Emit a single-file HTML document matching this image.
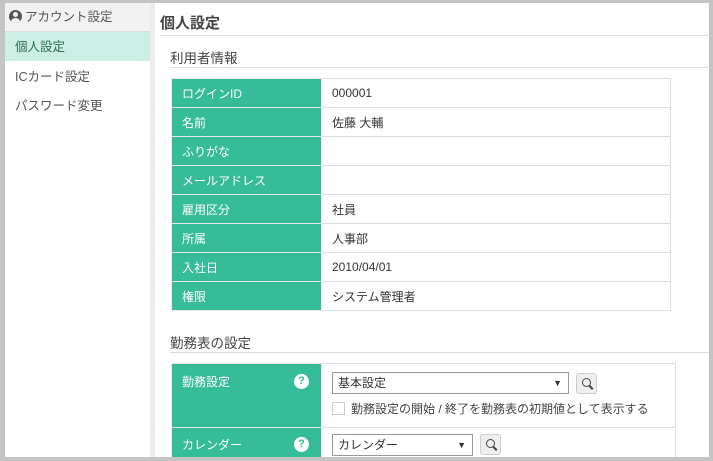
<!DOCTYPE html>
<html><head><meta charset="utf-8"><style>
*{box-sizing:border-box;margin:0;padding:0}
body{width:713px;height:461px;overflow:hidden;background:#c4c4c4;font-family:"Liberation Sans","Noto Sans CJK JP",sans-serif;font-size:12px;color:#333;position:relative}
.side{position:absolute;left:5px;top:3px;width:145px;height:454px;background:#fff}
.sh{height:29px;background:#f2f2f2;border-bottom:1px solid #ddd;line-height:29px;padding-left:4px;color:#555;font-size:12.5px}
.sh .ic{display:inline-block;width:13px;height:13px;border-radius:50%;background:#555;vertical-align:-2px;margin-right:3px;position:relative;overflow:hidden}
.sh .ic:before{content:"";position:absolute;left:4px;top:2px;width:5px;height:5px;border-radius:50%;background:#f2f2f2}
.sh .ic:after{content:"";position:absolute;left:2px;top:8px;width:9px;height:8px;border-radius:50%;background:#f2f2f2}
.it{height:29px;line-height:30px;padding-left:10px;color:#555;font-size:12.5px}
.act{background:#cdeee5;color:#2a6b55}
.sep{position:absolute;left:150px;top:3px;width:5px;height:454px;background:#ececec}
.main{position:absolute;left:155px;top:3px;width:554px;height:454px;background:#fff;overflow:hidden}
h1{position:absolute;left:5px;top:9px;font-size:15px;font-weight:bold;color:#444}
.l1{position:absolute;left:5px;top:32px;width:549px;height:1px;background:#ddd}
h2{position:absolute;left:15px;font-size:13.5px;font-weight:normal;color:#444}
.ln{position:absolute;left:15px;width:539px;height:1px;background:#ddd}
table{position:absolute;border-collapse:collapse}
td{border:1px solid #ddd;height:29px;padding-left:10px;font-size:12px}
td.k{background:#36bc98;color:#fff;width:150px;border-color:#e8e8e8}
.sel{display:inline-block;border:1px solid #999;height:22px;line-height:20px;padding-left:5px;position:relative;font-size:12px;vertical-align:middle}
.sel:after{content:"▼";position:absolute;right:6px;top:0;font-size:9px}
.mg{display:inline-block;width:21px;height:21px;border:1px solid #ccc;border-radius:3px;background:#eee;vertical-align:middle;margin-left:7px;position:relative}
.mg:before{content:"";position:absolute;left:5px;top:4px;width:7px;height:7px;border:1.5px solid #444;border-radius:50%}
.mg:after{content:"";position:absolute;left:13px;top:11px;width:2px;height:5px;background:#444;transform:rotate(-45deg)}
.q{position:absolute;right:12px;width:15px;height:15px;border-radius:50%;background:#fff;color:#36bc98;font-weight:bold;font-size:11px;text-align:center;line-height:15px}
</style></head><body>
<div class="side">
<div class="sh"><span class="ic"></span>アカウント設定</div>
<div class="it act">個人設定</div>
<div class="it" style="margin-top:1px">ICカード設定</div>
<div class="it">パスワード変更</div>
</div>
<div class="sep"></div>
<div class="main">
<h1>個人設定</h1><div class="l1"></div>
<h2 style="top:44px">利用者情報</h2><div class="ln" style="top:64px"></div>
<table style="left:16px;top:75px;width:500px">
<tr><td class="k">ログインID</td><td>000001</td></tr>
<tr><td class="k">名前</td><td>佐藤 大輔</td></tr>
<tr><td class="k">ふりがな</td><td></td></tr>
<tr><td class="k">メールアドレス</td><td></td></tr>
<tr><td class="k">雇用区分</td><td>社員</td></tr>
<tr><td class="k">所属</td><td>人事部</td></tr>
<tr><td class="k">入社日</td><td>2010/04/01</td></tr>
<tr><td class="k">権限</td><td>システム管理者</td></tr>
</table>
<h2 style="top:329px">勤務表の設定</h2><div class="ln" style="top:349px"></div>
<table style="left:16px;top:360px;width:505px">
<tr><td class="k" style="height:64px;vertical-align:top;padding-top:9px;position:relative">勤務設定<span class="q" style="top:10px">?</span></td>
<td style="vertical-align:top;padding-top:8px"><span class="sel" style="width:237px">基本設定</span><span class="mg"></span>
<div style="margin-top:6px;color:#444"><span style="display:inline-block;width:13px;height:13px;border:1px solid #ccc;vertical-align:-2px;margin-right:6px"></span>勤務設定の開始 / 終了を勤務表の初期値として表示する</div></td></tr>
<tr><td class="k" style="position:relative;height:34px">カレンダー<span class="q" style="top:9px">?</span></td>
<td><span class="sel" style="width:141px">カレンダー</span><span class="mg"></span></td></tr>
</table>
</div>
</body></html>
